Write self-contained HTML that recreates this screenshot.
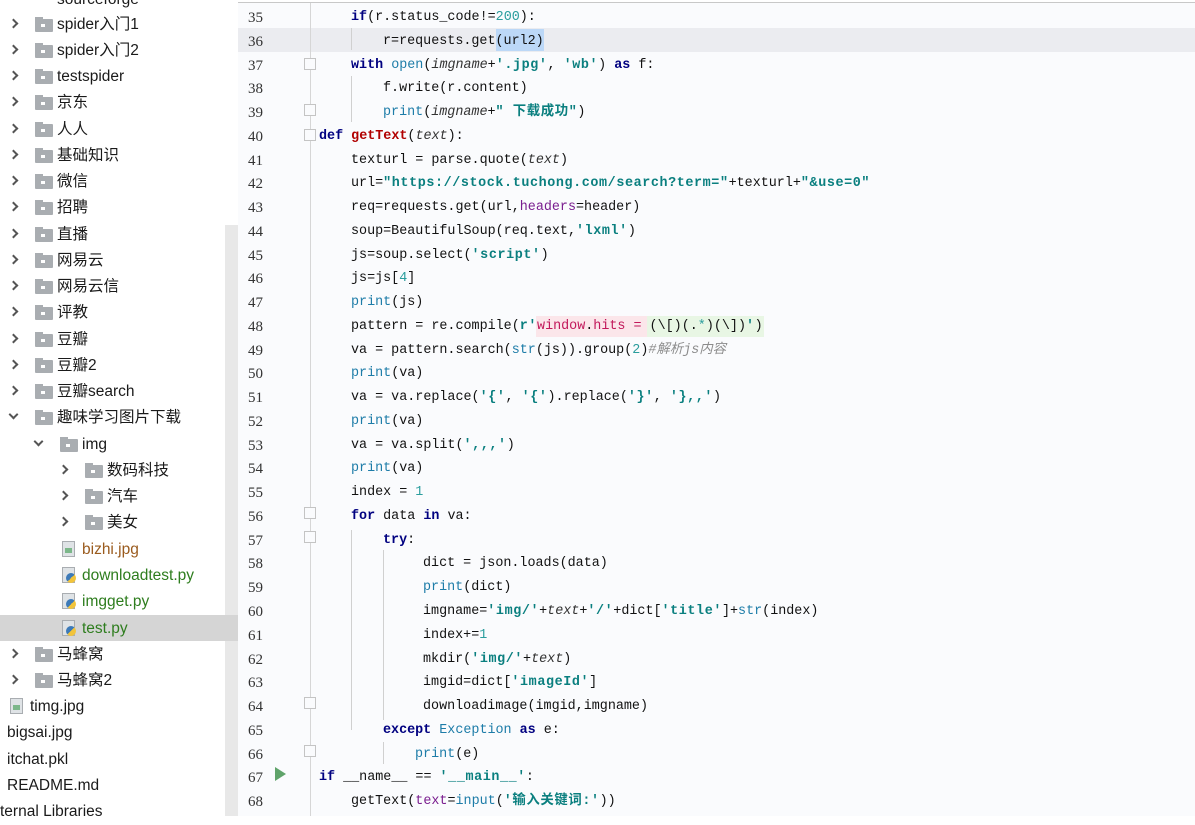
<!DOCTYPE html>
<html><head><meta charset="utf-8">
<style>
*{margin:0;padding:0;box-sizing:border-box}
body{width:1195px;height:816px;overflow:hidden;background:#fff;position:relative;font-family:"Liberation Sans","Noto Sans CJK SC",sans-serif}
.side{position:absolute;left:0;top:0;width:238px;height:816px;background:#fff}
.sb{position:absolute;left:225px;top:225px;width:13px;height:591px;background:#e8e8e8}
.row{position:absolute;height:26px;line-height:26px;font-size:15.5px;color:#1a1a1a;white-space:nowrap}
.arr{position:absolute;width:7px;height:7px;border-right:2px solid #555;border-bottom:2px solid #555;transform:rotate(-45deg)}
.arr.d{transform:rotate(45deg)}
.fold{position:absolute;width:18px;height:13px;background:#a9adb1;border-radius:1px}
.fold:before{content:"";position:absolute;left:0;top:-2px;width:8px;height:3px;background:#a9adb1}
.fold:after{content:"";position:absolute;left:6px;top:5px;width:4px;height:3px;background:#fff}
.file{position:absolute;width:13px;height:16px;background:#dfe3e6;border:1px solid #a9adb1}
.img:after{content:"";position:absolute;left:2px;top:6px;width:7px;height:5px;background:#7cb78a}
.py:after{content:"";position:absolute;left:3px;top:5px;width:10px;height:10px;border-radius:50%;background:linear-gradient(135deg,#3d7ab8 50%,#f2c43b 50%)}
.ed{position:absolute;left:238px;top:2px;width:957px;height:814px;background:#fafbfd;border-top:1px solid #c8c8c8}
.gl{position:absolute;left:310px;top:3px;width:1px;height:813px;background:#d6d6d6}
.ln{position:absolute;left:248px;font-family:"Liberation Serif","Noto Serif CJK SC",serif;font-size:15px;color:#333;height:24px;line-height:24px}
.c{position:absolute;font-family:"Liberation Mono","Noto Sans CJK SC",monospace;font-size:13.4px;color:#111;height:24px;line-height:24px;white-space:pre}
.k{font-weight:bold;color:#000080}
.s{font-weight:bold;color:#0a7f7f;letter-spacing:0.6px}
.b{color:#1d7ca8}
.n{color:#2a9d9d}
.f{color:#b10000;font-weight:bold}
.i{font-style:italic;color:#333}
.p{color:#7a1d8f}
.cm{color:#8c8c8c;font-style:italic}
.ig{position:absolute;width:1px;background:#d0d0d0}
.fm{position:absolute;left:304px;width:12px;height:12px;border:1px solid #c4c4c4;background:#fafbfd}
</style></head><body>
<div class="side">
<div class="row" style="left:57px;top:-13px">sourceforge</div>
</div>
<div class="sb"></div>
<div class="row" style="left:0;top:615px;width:238px;background:#d5d5d5"></div>
<div id="tree"></div>
<div class="ed"></div>
<div style="position:absolute;left:238px;top:28px;width:957px;height:24px;background:#ebecf0"></div>
<div style="position:absolute;left:496px;top:29px;width:48px;height:22px;background:#bcd8f7"></div>
<div style="position:absolute;left:536px;top:316px;width:111px;height:21px;background:#fbe6ea"></div>
<div style="position:absolute;left:647px;top:316px;width:117px;height:21px;background:#e8f6e4"></div>
<div class="gl"></div>
<div class="ig" style="left:351px;top:28px;height:22px"></div>
<div class="ig" style="left:351px;top:76px;height:46px"></div>
<div class="ig" style="left:351px;top:530px;height:200px"></div>
<div class="ig" style="left:383px;top:550px;height:170px"></div>
<div class="ig" style="left:383px;top:742px;height:22px"></div>
<div class="fm" style="top:58px"></div>
<div class="fm" style="top:104px"></div>
<div class="fm" style="top:129px"></div>
<div class="fm" style="top:507px"></div>
<div class="fm" style="top:531px"></div>
<div class="fm" style="top:697px"></div>
<div class="fm" style="top:745px"></div>
<div style="position:absolute;left:275px;top:767px;width:0;height:0;border-left:11px solid #5fa36a;border-top:7px solid transparent;border-bottom:7px solid transparent"></div>
<div id="code"></div>
<script>
var T=[
[24,0,'f','spider入门1'],[50,0,'f','spider入门2'],[76,0,'f','testspider'],[102,0,'f','京东'],[129,0,'f','人人'],[155,0,'f','基础知识'],[181,0,'f','微信'],[207,0,'f','招聘'],[234,0,'f','直播'],[260,0,'f','网易云'],[286,0,'f','网易云信'],[312,0,'f','评教'],[339,0,'f','豆瓣'],[365,0,'f','豆瓣2'],[391,0,'f','豆瓣search'],[417,0,'fd','趣味学习图片下载'],[444,1,'fd','img'],[470,2,'f','数码科技'],[496,2,'f','汽车'],[522,2,'f','美女'],
[549,2,'img','bizhi.jpg','#9a5b1e'],[575,2,'py','downloadtest.py','#2e7d1e'],[601,2,'py','imgget.py','#2e7d1e'],[628,2,'py','test.py','#2e7d1e'],
[654,0,'f','马蜂窝'],[680,0,'f','马蜂窝2'],[706,-1,'img','timg.jpg'],[732,-2,'none','bigsai.jpg'],[759,-2,'none','itchat.pkl'],[785,-2,'none','README.md'],[811,-2,'none','ternal Libraries']];
var h='';
T.forEach(function(r){var y=r[0],l=r[1],t=r[2],x=l*25;var top=y-12;
if(t=='f'||t=='fd'){h+='<div class="arr'+(t=='fd'?' d':'')+'" style="left:'+(x+10)+'px;top:'+(y-(t=='fd'?6:4))+'px"></div><div class="fold" style="left:'+(x+35)+'px;top:'+(y-5)+'px"></div><div class="row" style="left:'+(x+57)+'px;top:'+top+'px">'+r[3]+'</div>';}
else if(t=='img'||t=='py'){var fx=l==-1?10:62;h+='<div class="file '+t+'" style="left:'+fx+'px;top:'+(y-8)+'px"></div><div class="row" style="left:'+(fx+20)+'px;top:'+top+'px;color:'+(r[4]||'#1a1a1a')+'">'+r[3]+'</div>';}
else{h+='<div class="row" style="left:'+(r[3]=='ternal Libraries'?0:7)+'px;top:'+top+'px">'+r[3]+'</div>';}
});
document.getElementById('tree').innerHTML=h;
var C=[
[351,'<span class="k">if</span>(r.status_code!=<span class="n">200</span>):'],
[383,'r=requests.get(url2)'],
[351,'<span class="k">with</span> <span class="b">open</span>(<span class="i">imgname</span>+<span class="s">\'.jpg\'</span>, <span class="s">\'wb\'</span>) <span class="k">as</span> f:'],
[383,'f.write(r.content)'],
[383,'<span class="b">print</span>(<span class="i">imgname</span>+<span class="s">" 下载成功"</span>)'],
[319,'<span class="k">def</span> <span class="f">getText</span>(<span class="i">text</span>):'],
[351,'texturl = parse.quote(<span class="i">text</span>)'],
[351,'url=<span class="s">"https://stock.tuchong.com/search?term="</span>+texturl+<span class="s">"&amp;use=0"</span>'],
[351,'req=requests.get(url,<span class="p">headers</span>=header)'],
[351,'soup=BeautifulSoup(req.text,<span class="s">\'lxml\'</span>)'],
[351,'js=soup.select(<span class="s">\'script\'</span>)'],
[351,'js=js[<span class="n">4</span>]'],
[351,'<span class="b">print</span>(js)'],
[351,'pattern = re.compile(<span class="s">r\'</span><span style="color:#c2185b">window</span>.<span style="color:#c2185b">hits =</span> (\\[)(.<span class="n">*</span>)(\\])<span class="s">\'</span>)'],
[351,'va = pattern.search(<span class="b">str</span>(js)).group(<span class="n">2</span>)<span class="cm">#解析js内容</span>'],
[351,'<span class="b">print</span>(va)'],
[351,'va = va.replace(<span class="s">\'{\'</span>, <span class="s">\'{\'</span>).replace(<span class="s">\'}\'</span>, <span class="s">\'},,\'</span>)'],
[351,'<span class="b">print</span>(va)'],
[351,'va = va.split(<span class="s">\',,,\'</span>)'],
[351,'<span class="b">print</span>(va)'],
[351,'index = <span class="n">1</span>'],
[351,'<span class="k">for</span> data <span class="k">in</span> va:'],
[383,'<span class="k">try</span>:'],
[423,'dict = json.loads(data)'],
[423,'<span class="b">print</span>(dict)'],
[423,'imgname=<span class="s">\'img/\'</span>+<span class="i">text</span>+<span class="s">\'/\'</span>+dict[<span class="s">\'title\'</span>]+<span class="b">str</span>(index)'],
[423,'index+=<span class="n">1</span>'],
[423,'mkdir(<span class="s">\'img/\'</span>+<span class="i">text</span>)'],
[423,'imgid=dict[<span class="s">\'imageId\'</span>]'],
[423,'downloadimage(imgid,imgname)'],
[383,'<span class="k">except</span> <span class="b">Exception</span> <span class="k">as</span> e:'],
[415,'<span class="b">print</span>(e)'],
[319,'<span class="k">if</span> __name__ == <span class="s">\'__main__\'</span>:'],
[351,'getText(<span class="p">text</span>=<span class="b">input</span>(<span class="s">\'输入关键词:\'</span>))']];
var g='';
C.forEach(function(c,i){var y=Math.round(17+i*23.76)-11;
g+='<div class="ln" style="top:'+y+'px">'+(35+i)+'</div><div class="c" style="left:'+c[0]+'px;top:'+y+'px">'+c[1]+'</div>';});
document.getElementById('code').innerHTML=g;
</script>
</body></html>
